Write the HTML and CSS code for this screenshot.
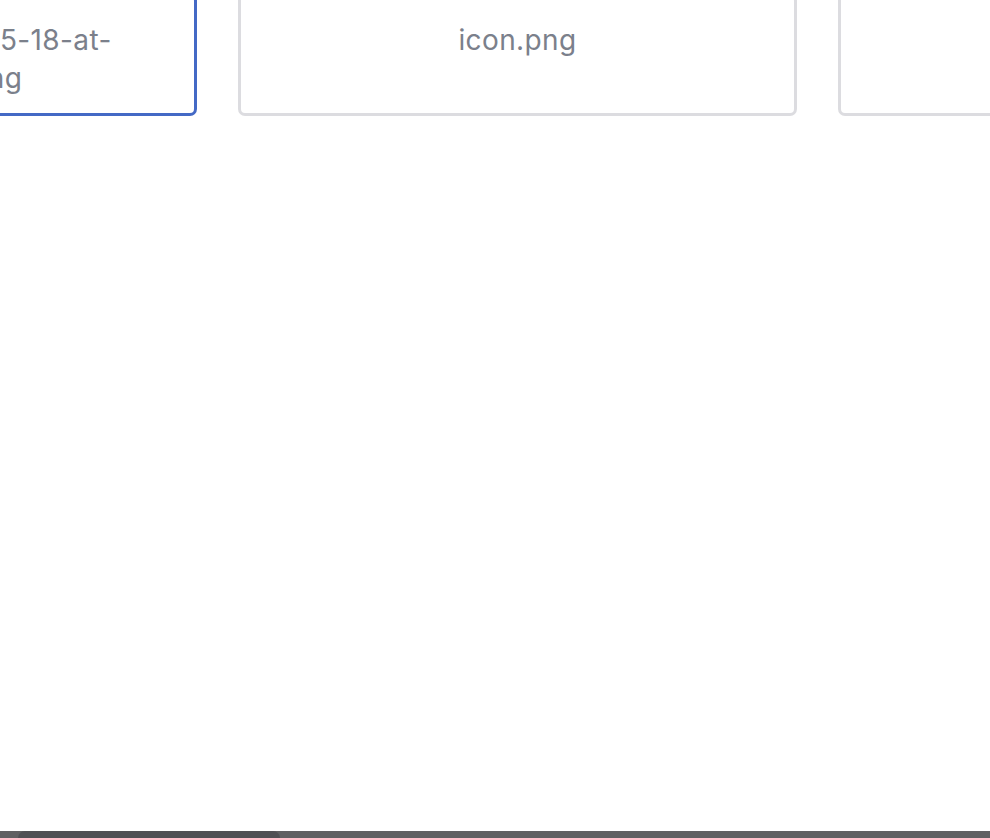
FILE: index.html
```html
<!DOCTYPE html>
<html>
<head>
<meta charset="utf-8">
<link rel="stylesheet" href="styles.css">
</head>
<body>
<div class="page">
  <div class="row">
    <div class="card selected"><div class="name">Screen Shot 2020-05-18-at-<br>10.1.45-AM.png</div></div>
    <div class="card"><div class="name">icon.png</div></div>
    <div class="card"><div class="name">logo.png</div></div>
  </div>
</div>
<div class="hscroll"><div class="thumb"></div></div>
</body>
</html>
```
FILE: styles.css
```css
html, body {
  margin: 0;
  padding: 0;
  height: 100%;
  overflow: hidden;
  background: #ffffff;
}
body {
  display: flex;
  flex-direction: column;
  font-family: Inter, "Liberation Sans", sans-serif;
}
.page {
  flex: 1;
  overflow: hidden;
}
.row {
  display: flex;
  gap: 41px;
  margin-top: -6px;
  margin-left: -362px;
}
.card {
  flex: 0 0 559px;
  box-sizing: border-box;
  border: 3px solid #dcdce0;
  border-radius: 7px;
  padding: 24px 12px 16px;
  background: #fff;
}
.card.selected {
  border-color: #4469c5;
}
.name {
  font-size: 28px;
  line-height: 38px;
  letter-spacing: 0.4px;
  color: #7b808b;
  text-align: center;
  white-space: nowrap;
}
.hscroll {
  height: 7px;
  background: #5f6062;
  padding-left: 18px;
}
.thumb {
  width: 262px;
  height: 14px;
  background: #4f5054;
  border-radius: 7px;
}
```
